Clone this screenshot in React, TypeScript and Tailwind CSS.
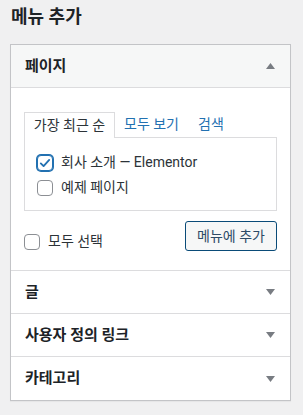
const font = "font-['Roboto','Noto_Sans_CJK_KR',sans-serif]";

function Triangle({ up }: { up?: boolean }) {
  return (
    <svg width="9" height="6" viewBox="0 0 9 6" className="shrink-0">
      <polygon points={up ? "4.5,0 9,6 0,6" : "0,0 9,0 4.5,6"} fill="#787c82" />
    </svg>
  );
}

function Checkbox({ checked }: { checked?: boolean }) {
  return checked ? (
    <span className="flex h-4 w-4 shrink-0 items-center justify-center rounded-[4px] border border-[#2271b1] bg-white shadow-[0_0_0_1px_#2271b1]">
      <svg width="14" height="14" viewBox="0 0 20 20">
        <path d="M4 10.5l4 4 8-9" fill="none" stroke="#2271b1" strokeWidth="2.6" strokeLinecap="round" strokeLinejoin="round" />
      </svg>
    </span>
  ) : (
    <span className="h-4 w-4 shrink-0 rounded-[4px] border border-[#8c8f94] bg-white" />
  );
}

const rows = ["글", "사용자 정의 링크", "카테고리"];

export default function App() {
  return (
    <div className={`min-h-[415px] w-[303px] bg-[#f0f0f1] ${font} text-[#2c3338]`}>
      <h2 className="pl-[11px] pt-[5px] text-[18px] font-semibold leading-[24px] text-[#1d2327]">메뉴 추가</h2>

      <div className="ml-[10px] mt-[15px] w-[281px] border border-[#c3c4c7] bg-white shadow-[0_1px_1px_rgba(0,0,0,0.04)]">
        <div className="flex h-[43px] items-center justify-between border-b border-[#dcdcde] bg-[#f6f7f7] pl-[14px] pr-[15px]">
          <span className="text-[15px] font-semibold text-[#1d2327]">페이지</span>
          <Triangle up />
        </div>

        <div className="border-b border-[#dcdcde] px-[13px] pb-[18px] pt-[24px]">
          <div className="flex items-end text-[14px]">
            <div className="relative z-10 -mb-px flex h-[26px] w-[91px] items-center justify-center border border-b-0 border-[#dcdcde] bg-white text-[#2c3338]">
              가장 최근 순
            </div>
            <div className="flex h-[25px] items-center px-[9px] text-[#2271b1]">모두 보기</div>
            <div className="flex h-[25px] items-center px-[10px] text-[#2271b1]">검색</div>
          </div>
          <div className="border border-[#dcdcde] pb-[10px] pl-[12px] pt-[12px] text-[14px]">
            <div className="flex h-[25px] items-center gap-[8px]">
              <Checkbox checked />
              <span>회사 소개 — Elementor</span>
            </div>
            <div className="flex h-[25px] items-center gap-[8px]">
              <Checkbox />
              <span>예제 페이지</span>
            </div>
          </div>
          <div className="mt-[10px] flex items-start justify-between">
            <label className="mt-[10px] flex items-center gap-[8px] text-[14px]">
              <Checkbox />
              <span>모두 선택</span>
            </label>
            <button className="h-[30px] w-[92px] rounded-[3px] border border-[#0a4b78] bg-[#f6f7f7] text-[14px] text-[#2c4a66]">
              메뉴에 추가
            </button>
          </div>
        </div>

        {rows.map((r, i) => (
          <div
            key={r}
            className={[
              "flex h-[43px] items-center justify-between pl-[14px] pr-[15px]",
              i < rows.length - 1 ? "border-b border-[#dcdcde]" : "",
            ].join(" ")}
          >
            <span className="text-[15px] font-semibold text-[#1d2327]">{r}</span>
            <Triangle />
          </div>
        ))}
      </div>
    </div>
  );
}
